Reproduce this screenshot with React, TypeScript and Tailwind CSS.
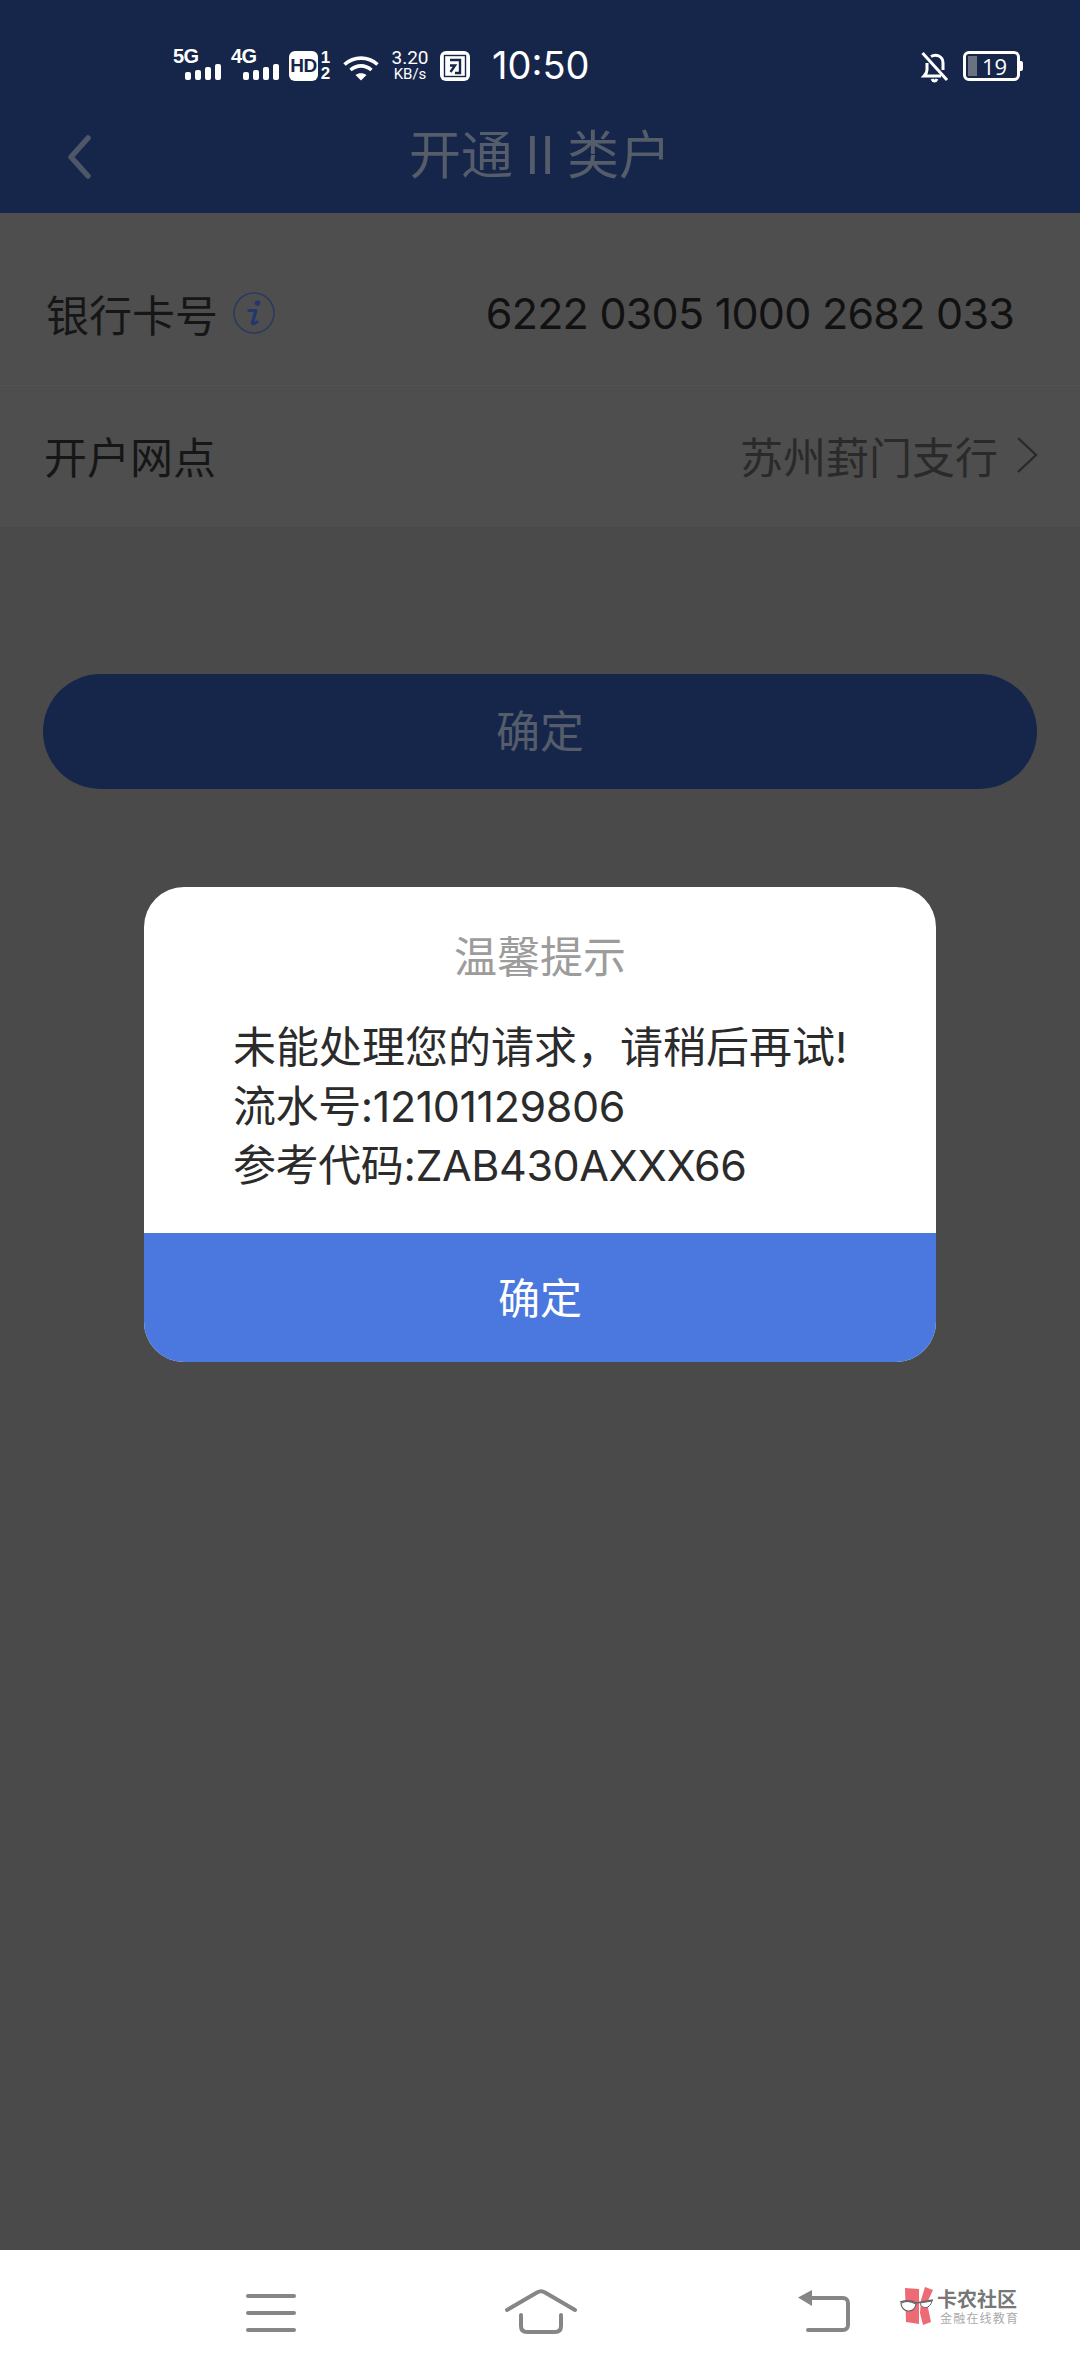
const cjk = "font-['Noto_Sans_CJK_SC','Noto_Sans',sans-serif]";
const latin = "font-['Inter','Noto_Sans_CJK_SC',sans-serif]";

function SignalBars() {
  return (
    <div className="flex items-end gap-[4px] h-[16px]">
      <span className="w-[6px] h-[8px] rounded-[2px] bg-white" />
      <span className="w-[6px] h-[10px] rounded-[2px] bg-white" />
      <span className="w-[6px] h-[13px] rounded-[2px] bg-white" />
      <span className="w-[6px] h-[16px] rounded-[2px] bg-white" />
    </div>
  );
}

function Signal({ label }: { label: string }) {
  return (
    <div className="w-[48px] h-[32px] flex flex-col">
      <span className="text-[20px] leading-[16px] font-bold text-white font-['Liberation_Sans',sans-serif] tracking-[-0.5px]">{label}</span>
      <div className="flex justify-end">
        <SignalBars />
      </div>
    </div>
  );
}

function StatusBar() {
  return (
    <div className="h-[84px] pl-[173px] pr-[60px] pt-[48px] flex items-start text-white">
      <Signal label="5G" />
      <div className="w-[10px]" />
      <Signal label="4G" />
      <div className="w-[10px] shrink-0" />
      <div className="w-[29px] h-[30px] rounded-[6px] bg-white flex items-center justify-center text-[#16264a] text-[19px] font-bold font-['Liberation_Sans',sans-serif] tracking-[-0.5px] mt-[3px]">HD</div>
      <div className="w-[13px] ml-[1px] mt-[2px] flex flex-col items-center text-[17px] leading-[16px] font-bold font-['Liberation_Sans',sans-serif]">
        <span>1</span>
        <span>2</span>
      </div>
      <svg className="ml-[11px] mt-[7px]" width="36" height="26" viewBox="0 0 36 26" fill="none">
        <path d="M1.5 9.5C11 1 25 1 34.5 9.5" stroke="#fff" strokeWidth="3.6" />
        <path d="M7.5 15C14 9.5 22 9.5 28.5 15" stroke="#fff" strokeWidth="3.6" />
        <path d="M18 25.5L12.5 20C15.5 17.5 20.5 17.5 23.5 20Z" fill="#fff" />
      </svg>
      <div className="ml-[12px] w-[38px] mt-[1px] flex flex-col items-center font-['Roboto',sans-serif] text-white">
        <span className="text-[19px] leading-[18px]">3.20</span>
        <span className="text-[15px] leading-[15px]">KB/s</span>
      </div>
      <svg className="ml-[11px] mt-[3px]" width="30" height="30" viewBox="0 0 30 30" fill="none">
        <rect width="30" height="30" rx="6" fill="#fff" />
        <rect x="4.5" y="4.5" width="21" height="21" stroke="#16264a" strokeWidth="1.4" />
        <path d="M10 9H20V22H15" stroke="#16264a" strokeWidth="2.4" />
        <path d="M10 14.5H15L10.5 21" stroke="#16264a" strokeWidth="2.4" />
      </svg>
      <span className="ml-[22px] text-[38px] leading-[36px] text-white font-['Inter',sans-serif] font-normal mt-[-1px]">10:50</span>
      <svg className="ml-auto mt-[3px]" width="28" height="32" viewBox="0 0 28 32" fill="none" stroke="#fff" strokeWidth="3">
        <path d="M6 12V19C6 21 5 23 3 25H20M10 5.5C15 2.5 22 5 22 12V19" />
        <path d="M11 28C12 30.5 15 30.5 16 28" />
        <path d="M1.5 2L26 29" />
      </svg>
      <div className="ml-[14px] relative w-[57px] h-[30px] rounded-[6px] border-[3px] border-white flex items-center mt-[3px]">
        <span className="absolute left-[2px] top-[2px] bottom-[2px] w-[9px] bg-[#6b7180]" />
        <span className="ml-[16px] text-[22px] leading-none text-white font-['Open_Sans',sans-serif]">19</span>
        <span className="absolute right-[-6px] top-[7px] w-[3px] h-[10px] rounded-r-[2px] bg-white" />
      </div>
    </div>
  );
}

function TopBar() {
  return (
    <div className="bg-[#16264a] h-[213px] shrink-0">
      <StatusBar />
      <div className={`relative h-[129px] flex items-start justify-center ${cjk}`}>
        <svg className="absolute left-[66px] top-[51px]" width="26" height="44" viewBox="0 0 26 44" fill="none">
          <path d="M22 3L5 22L22 41" stroke="#4f5668" strokeWidth="5.5" strokeLinecap="round" strokeLinejoin="round" />
        </svg>
        <span className="mt-[33px] text-[52px] leading-[70px] text-[#555c6a]">开通 II 类户</span>
      </div>
    </div>
  );
}

function Rows() {
  return (
    <div className="bg-[#4e4e4e]">
      <div className="h-[172px] flex items-center justify-between pl-[46px] pr-[66px] pt-[28px]">
        <div className={`flex items-center ${cjk}`}>
          <span className="text-[43px] leading-[60px] text-[#161616]">银行卡号</span>
          <svg className="ml-[14px]" width="44" height="44" viewBox="0 0 44 44" fill="none">
            <circle cx="22" cy="22" r="20" stroke="#2b3a5e" strokeWidth="1.6" />
            <circle cx="25.5" cy="12" r="2.8" fill="#22376d" />
            <path d="M17 19.5H24L20.5 31.5C20 33 21 33.5 25 31" stroke="#22376d" strokeWidth="3.2" strokeLinejoin="round" strokeLinecap="round" />
          </svg>
        </div>
        <span className={`text-[43px] leading-[60px] text-[#111] tracking-[-0.75px] ${latin}`}>6222 0305 1000 2682 033</span>
      </div>
      <div className={`h-[142px] border-t border-[#525252] flex items-center justify-between pl-[44px] pr-[42px] pb-[4px] ${cjk}`}>
        <span className="text-[43px] leading-[60px] text-[#161616]">开户网点</span>
        <div className="flex items-center">
          <span className="text-[43px] leading-[60px] text-[#2a2a2a]">苏州葑门支行</span>
          <svg className="ml-[18px]" width="22" height="38" viewBox="0 0 22 38" fill="none">
            <path d="M2 2L20 19L2 36" stroke="#2a2a2a" strokeWidth="2.4" />
          </svg>
        </div>
      </div>
    </div>
  );
}

function Dialog() {
  return (
    <div className="mx-[144px] mt-[98px] w-[792px] rounded-[40px] overflow-hidden bg-white">
      <div className="h-[346px] pt-[37px]">
        <p className={`text-center text-[43px] leading-[60px] text-[#9c9c9c] ${cjk}`}>温馨提示</p>
        <div className={`mt-[34px] pl-[89px] text-[43px] leading-[59px] text-[#2b2b2b] ${latin}`}>
          <p>未能处理您的请求，请稍后再试!</p>
          <p className="tracking-[-0.4px]">流水号:12101129806</p>
          <p className="tracking-[-0.4px]">参考代码:ZAB430AXXX66</p>
        </div>
      </div>
      <div className={`h-[129px] pb-[5px] bg-[#4a78de] flex items-center justify-center text-[42px] text-white ${cjk}`}>确定</div>
    </div>
  );
}

function NavBar() {
  return (
    <div className="h-[126px] bg-white relative shrink-0">
      <div className="absolute left-[246px] top-[44px] w-[50px] flex flex-col gap-[13px]">
        <span className="h-[4px] rounded-full bg-[#868686]" />
        <span className="h-[4px] rounded-full bg-[#868686]" />
        <span className="h-[4px] rounded-full bg-[#868686]" />
      </div>
      <svg className="absolute left-[504px] top-[38px]" width="74" height="50" viewBox="0 0 74 50" fill="none" stroke="#868686" strokeWidth="4" strokeLinecap="round" strokeLinejoin="round">
        <path d="M3 22L33 4.5C35.5 3 38.5 3 41 4.5L71 22" />
        <path d="M17 27V38C17 42 19 44 23 44H51C55 44 57 42 57 38V27" />
      </svg>
      <svg className="absolute left-[796px] top-[38px]" width="56" height="46" viewBox="0 0 56 46" fill="none">
        <path d="M2 9.5L16 2L16 18Z" fill="#868686" />
        <path d="M12 10H47C50 10 52 12 52 15V37C52 40 50 42 47 42H12" stroke="#868686" strokeWidth="4" strokeLinecap="round" />
      </svg>
      <svg className="absolute left-[899px] top-[36px]" width="38" height="40" viewBox="0 0 38 40" fill="none">
        <path d="M6 2L20 3L20 38L7 36Z" fill="#ec6b74" />
        <path d="M22 14L26 1L34 4L28 17L32 36L24 39L21 27Z" fill="#ec6b74" />
        <path d="M1 16C8 14 14 15 17 17L34 14" stroke="#666" strokeWidth="1.3" />
        <path d="M2 17C2 27 16 28 17 18C12 15 6 15 2 17Z" fill="#fff" stroke="#666" strokeWidth="1.2" />
        <path d="M21 17C23 24 31 23 33 15Z" fill="#fff" stroke="#666" strokeWidth="1" />
      </svg>
      <div className={`absolute left-[937px] top-[37px] ${cjk}`}>
        <p className="text-[20px] leading-[24px] font-bold text-[#777]">卡农社区</p>
        <p className="ml-[3px] text-[12px] leading-[13px] tracking-[1.2px] text-[#aaa]">金融在线教育</p>
      </div>
    </div>
  );
}

export default function App() {
  return (
    <div className="w-[1080px] h-[2376px] flex flex-col overflow-hidden bg-[#4a4a4a]">
      <TopBar />
      <div className="flex-1">
        <Rows />
        <div className={`mx-[43px] mt-[147px] h-[115px] pb-[5px] rounded-full bg-[#16264a] flex items-center justify-center text-[44px] text-[#555c6a] ${cjk}`}>确定</div>
        <Dialog />
      </div>
      <NavBar />
    </div>
  );
}
